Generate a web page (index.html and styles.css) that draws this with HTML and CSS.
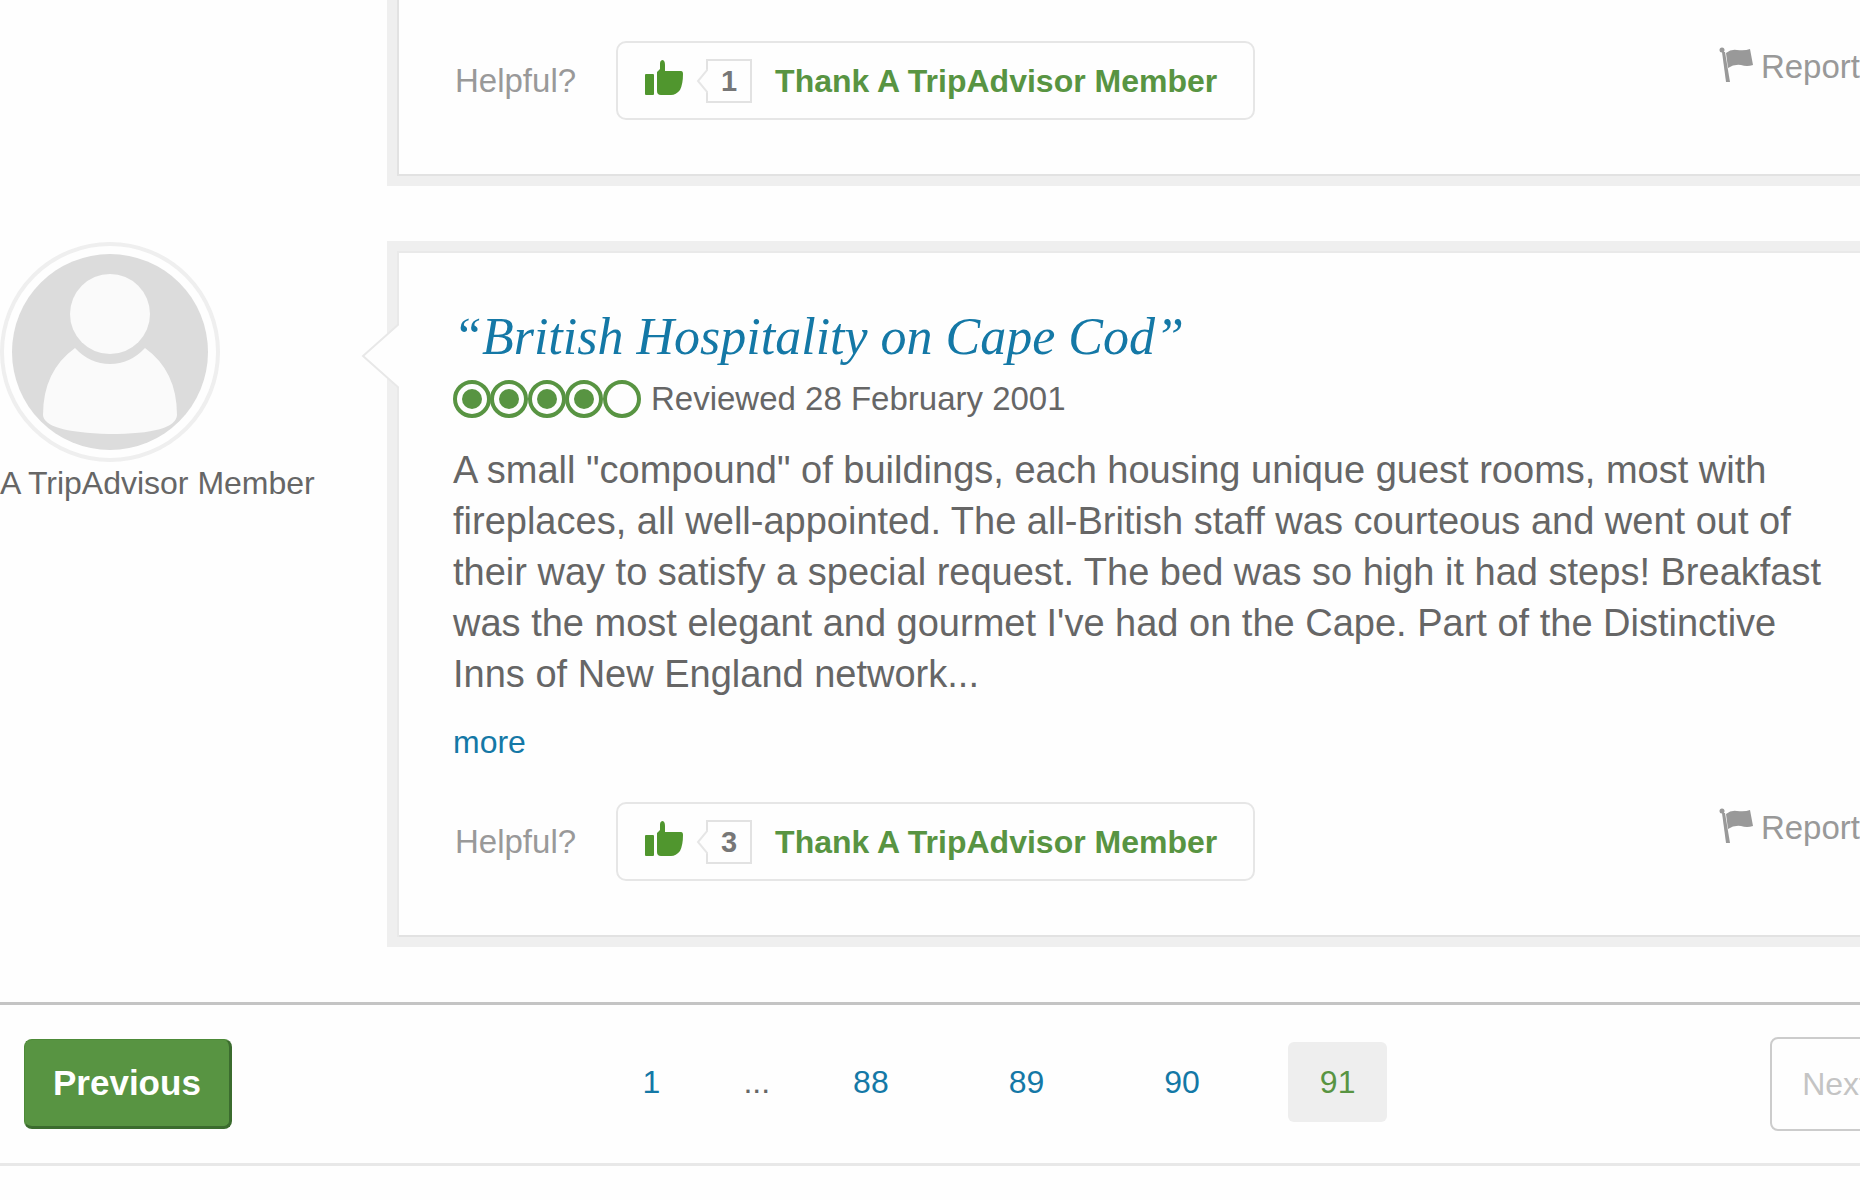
FILE: index.html
```html
<!DOCTYPE html>
<html lang="en">
<head>
<meta charset="utf-8">
<title>Reviews</title>
<link rel="stylesheet" href="styles.css">
</head>
<body>
<svg class="sprite" aria-hidden="true">
  <symbol id="thumb" viewBox="0 0 38 36">
    <rect x="0" y="14" width="9" height="21" rx="1"/>
    <path d="M12 12 L15 9 V3 Q15 1 17 0 Q20 0 20 5 V11 H36 Q38 11 38 14 Q38 24 35 30 Q31 35 26 35 H16 Q12 35 12 31 Z"/>
  </symbol>
  <symbol id="flag" viewBox="0 0 34 36">
    <circle cx="3" cy="3" r="2.5"/>
    <path d="M3 5 L6 5 L11 35 L7 35 Z"/>
    <path d="M7 6 Q12 2 18 3 Q26 4 31 2 L34 18 Q28 20 22 18 Q15 17 9 21 Z"/>
  </symbol>
</svg>
<main class="page">
  <article class="review review-cut">
    <div class="card">
      <div class="actions">
        <span class="helpful">Helpful?</span>
        <button class="thank" type="button">
          <svg class="thumb" aria-hidden="true"><use href="#thumb"/></svg>
          <span class="count"><svg class="nib" viewBox="0 0 12 24" aria-hidden="true"><path d="M12 0 L2 12 L12 24"/></svg>1</span>
          Thank A TripAdvisor Member
        </button>
        <a class="report" href="#report"><svg class="flag" aria-hidden="true"><use href="#flag"/></svg>Report</a>
      </div>
    </div>
  </article>

  <article class="review">
    <div class="member">
      <svg class="avatar" viewBox="1 0 222 222" aria-hidden="true">
        <circle class="avatar-ring" cx="111" cy="111" r="108"/>
        <circle class="avatar-disc" cx="111" cy="111" r="98"/>
        <circle class="avatar-person" cx="111" cy="73" r="40"/>
        <path class="avatar-person" d="M76 107 Q91 123 111 123 Q131 123 146 107 Q178 130 178 174 Q177 193 110 193 Q45 191 44 174 Q44 130 76 107 Z"/>
      </svg>
      <span class="name">A TripAdvisor Member</span>
    </div>
    <div class="card">
      <svg class="pointer" viewBox="0 0 38 64" aria-hidden="true"><path d="M38 0 L2 32 L38 64"/></svg>
      <h2 class="title"><a href="#review">“British Hospitality on Cape Cod”</a></h2>
      <div class="rating">
        <svg class="bubbles" viewBox="0 0 188 38" role="img" aria-label="4 of 5">
          <g class="rings"><circle cx="19" cy="19" r="17"/><circle cx="56" cy="19" r="17"/><circle cx="94" cy="19" r="17"/><circle cx="131" cy="19" r="17"/><circle cx="169" cy="19" r="17"/></g>
          <g class="dots"><circle cx="19" cy="19" r="10"/><circle cx="56" cy="19" r="10"/><circle cx="94" cy="19" r="10"/><circle cx="131" cy="19" r="10"/></g>
        </svg>
        <span>Reviewed 28 February 2001</span>
      </div>
      <p class="text">A small "compound" of buildings, each housing unique guest rooms, most with fireplaces, all well-appointed. The all-British staff was courteous and went out of their way to satisfy a special request. The bed was so high it had steps! Breakfast was the most elegant and gourmet I've had on the Cape. Part of the Distinctive Inns of New England network...</p>
      <a class="more" href="#more">more</a>
      <div class="actions">
        <span class="helpful">Helpful?</span>
        <button class="thank" type="button">
          <svg class="thumb" aria-hidden="true"><use href="#thumb"/></svg>
          <span class="count"><svg class="nib" viewBox="0 0 12 24" aria-hidden="true"><path d="M12 0 L2 12 L12 24"/></svg>3</span>
          Thank A TripAdvisor Member
        </button>
        <a class="report" href="#report"><svg class="flag" aria-hidden="true"><use href="#flag"/></svg>Report</a>
      </div>
    </div>
  </article>

  <nav class="pager" aria-label="Pages">
    <button class="previous" type="button">Previous</button>
    <div class="numbers">
      <a href="#1">1</a>
      <span class="dots-gap">...</span>
      <a href="#88">88</a>
      <a href="#89">89</a>
      <a href="#90">90</a>
      <span class="current" aria-current="page">91</span>
    </div>
    <button class="next" type="button" disabled>Next</button>
  </nav>
</main>
</body>
</html>
```
FILE: styles.css
```css
* { box-sizing: border-box; }

body {
  margin: 0;
  overflow-x: hidden;
  background: #fefefe;
  color: #666;
  font: 32px/40px "Liberation Sans", Arial, sans-serif;
}

a { color: #1478a6; text-decoration: none; }
button { font: inherit; }
svg { display: block; flex: none; }
.sprite { position: absolute; width: 0; height: 0; }

.review {
  display: grid;
  grid-template-columns: 387px minmax(0, 1fr);
  margin-bottom: 55px;
}

.card {
  position: relative;
  grid-column: 2;
  padding: 54px 0 56px 56px;
  border: solid #efefef;
  border-width: 10px 0 10px 10px;
  box-shadow: inset 2px 2px #e9e9e9, inset 0 -2px #e2e2e2;
}
.review-cut .card {
  padding-top: 41px;
  border-top: 0;
  box-shadow: inset 2px -2px #e2e2e2;
}

.pointer {
  position: absolute;
  top: 73px;
  left: -36px;
  width: 38px;
  height: 64px;
  fill: #fefefe;
  stroke: #e8e8e8;
  stroke-width: 2;
}

.member { display: flex; flex-direction: column; align-items: flex-start; }
.avatar { width: 222px; height: 222px; }
.avatar-ring { fill: #fefefe; stroke: #efefef; stroke-width: 4; }
.avatar-disc { fill: #dcdcdc; }
.avatar-person { fill: #fafafa; }

.title {
  margin: 0;
  font: italic 52px/64px Georgia, "Liberation Serif", serif;
}

.rating { display: flex; align-items: center; gap: 10px; margin-top: 10px; font-size: 33px; }
.bubbles { width: 188px; height: 38px; }
.rings { fill: none; stroke: #589442; stroke-width: 4; }
.dots { fill: #589442; }

.text { max-width: 1400px; margin: 26px 0 22px; font-size: 38px; line-height: 51px; }
.more { display: block; }

.actions { display: flex; align-items: center; margin-top: 40px; }
.review-cut .actions { margin-top: 0; }
.helpful { padding-left: 2px; margin-right: 40px; color: #999; font-size: 33px; }

.thank {
  display: flex;
  align-items: center;
  gap: 23px;
  height: 79px;
  padding: 0 36px 0 27px;
  border: 2px solid #e6e6e6;
  border-radius: 10px;
  background: #fefefe;
  color: #589442;
  font-weight: bold;
  white-space: nowrap;
}
.thumb { width: 38px; height: 36px; margin-bottom: 6px; fill: #50962e; }
.count {
  position: relative;
  width: 46px;
  border: 2px solid #e2e2e2;
  color: #777;
  font-size: 29px;
  text-align: center;
}
.nib {
  position: absolute;
  top: 8px;
  left: -12px;
  width: 12px;
  height: 24px;
  fill: #fefefe;
  stroke: #e6e6e6;
  stroke-width: 2;
}

.report {
  display: flex;
  gap: 8px;
  margin: 0 0 28px auto;
  color: #999;
  font-size: 33px;
}
.flag { width: 34px; height: 36px; fill: #999; }

.pager {
  display: flex;
  align-items: center;
  justify-content: space-between;
  margin-right: -40px;
  padding: 32px 0 32px 24px;
  border-top: 3px solid #c4c4c4;
  border-bottom: 3px solid #e8e8e8;
}
.previous {
  height: 90px;
  padding: 0 28px;
  border: solid #4d8a38;
  border-width: 1px 3px 3px 1px;
  border-right-color: #3b6c2e;
  border-bottom-color: #3b6c2e;
  border-radius: 8px;
  background: #589442;
  color: #fff;
  font-size: 35px;
  font-weight: bold;
}
.numbers { display: flex; align-items: center; gap: 56px; margin: 0 4px 4px 0; }
.numbers a, .current { padding: 20px 32px; }
.dots-gap { margin: 0 -5px; }
.current { border-radius: 6px; background: #eee; color: #589442; }
.next {
  height: 94px;
  padding: 0 30px;
  border: 2px solid #ccc;
  border-radius: 8px;
  background: #fefefe;
  color: #c4c4c4;
}
```
